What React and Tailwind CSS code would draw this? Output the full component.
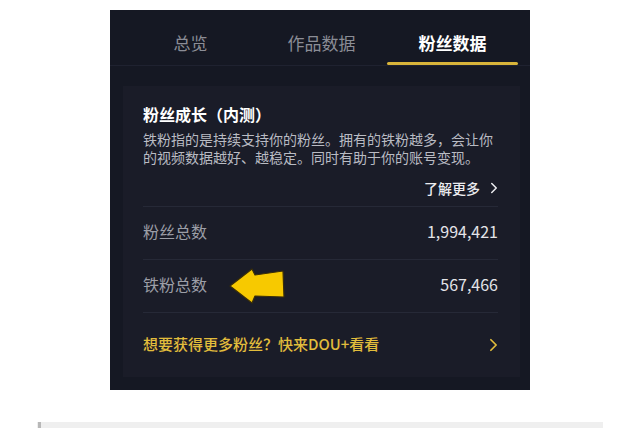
import React from "react";

const CJK = { fontFamily: '"Noto Sans CJK SC", "Noto Sans", sans-serif' };

function Tab({ label, active }) {
  return (
    <div className="flex w-[131px] flex-col items-center pt-[21px]">
      <div
        className={`text-[17px] leading-[24px] ${
          active ? "font-bold text-white" : "text-[#8b8d96]"
        }`}
      >
        {label}
      </div>
      <div
        className={`mt-[7px] h-[3px] w-full rounded-full ${
          active ? "bg-[#d8b43a]" : "bg-transparent"
        }`}
      />
    </div>
  );
}

function Chevron({ className }) {
  return (
    <svg viewBox="0 0 10 16" className={className} fill="none">
      <path d="M2 2l6 6-6 6" stroke="currentColor" strokeWidth="2" strokeLinecap="round" strokeLinejoin="round" />
    </svg>
  );
}

function YellowArrow() {
  return (
    <svg width="60" height="38" viewBox="0 0 60 38" className="ml-[21px] mt-[4px]">
      <polygon
        points="2,19 24,2 27,8 55,4 56,30 27,29 24,36"
        fill="#f7c900"
        stroke="#3a2e08"
        strokeWidth="1.2"
        strokeLinejoin="round"
      />
    </svg>
  );
}

function StatRow({ label, value, arrow }) {
  return (
    <div className="flex h-[53px] items-center justify-between border-b border-[#262937] pb-[4px]">
      <div className="flex items-center">
        <span className="text-[16px] text-[#9c9ea7]">{label}</span>
        {arrow ? <YellowArrow /> : null}
      </div>
      <span className="text-[16px] text-[#e4e4e8]">{value}</span>
    </div>
  );
}

export default function App() {
  return (
    <div className="relative h-[428px] w-[640px] overflow-hidden bg-white" style={CJK}>
      <div className="ml-[110px] mt-[10px] h-[380px] w-[420px] bg-[#151823]">
        <div className="flex h-[56px] border-b border-[#1f2230] pl-[15px]">
          <Tab label="总览" />
          <Tab label="作品数据" />
          <Tab label="粉丝数据" active />
        </div>

        <div className="ml-[13px] mr-[10px] mt-[20px] h-[291px] bg-[#1a1c28] pl-[20px] pr-[22px] pt-[16px]">
          <div className="text-[16px] font-bold leading-[24px] text-white">
            粉丝成长（内测）
          </div>
          <div className="mt-[4px] text-[14px] leading-[18px] text-[#b9bbc3]">
            铁粉指的是持续支持你的粉丝。拥有的铁粉越多，会让你
            <br />
            的视频数据越好、越稳定。同时有助于你的账号变现。
          </div>
          <div className="mt-[12px] flex items-center justify-end border-b border-[#262937] pb-[8px]">
            <span className="text-[14px] font-medium leading-[20px] text-[#ececf0]">了解更多</span>
            <Chevron className="ml-[10px] h-[12px] w-[8px] text-[#ececf0]" />
          </div>

          <StatRow label="粉丝总数" value="1,994,421" />
          <StatRow label="铁粉总数" value="567,466" arrow />

          <div className="flex h-[65px] items-center justify-between pb-[2px]">
            <span className="text-[15px] font-medium text-[#e2bd3c]">
              想要获得更多粉丝？快来DOU+看看
            </span>
            <Chevron className="h-[14px] w-[9px] text-[#e2bd3c]" />
          </div>
        </div>
      </div>

      <div className="absolute bottom-0 left-[37px] flex h-[6px] w-[566px] bg-[#efefef]">
        <div className="ml-[1px] h-full w-[3px] bg-[#b8b8b8]" />
      </div>
    </div>
  );
}
